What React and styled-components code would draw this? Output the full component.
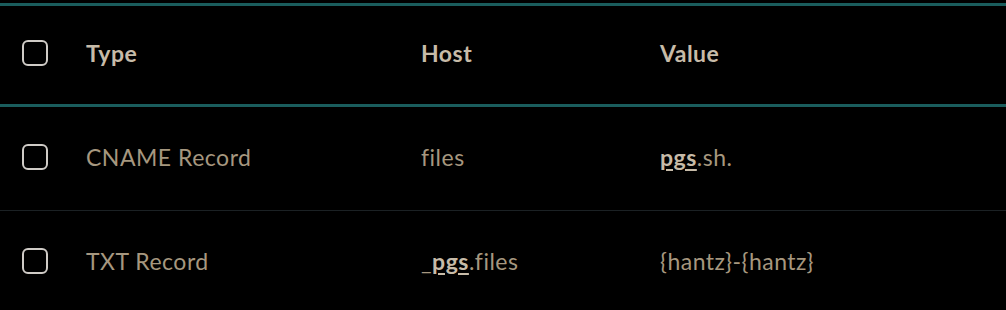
import React from "react";
import styled, { createGlobalStyle } from "styled-components";

const GlobalStyle = createGlobalStyle`
  html, body {
    margin: 0;
    padding: 0;
    background: #000;
  }
  body {
    font-family: "Lato", "Liberation Sans", sans-serif;
  }
`;

const StyledTable = styled.div`
  padding-top: 3px;
  width: 1006px;
  background: #000;
`;

const Row = styled.div`
  display: grid;
  grid-template-columns: 86px 335px 239px 1fr;
  align-items: center;
  box-sizing: content-box;
  height: ${props => (props.header ? "94px" : "99px")};
  padding-bottom: 4px;
  border-top: ${props => (props.header ? "3px solid #1a5d5d" : "none")};
  border-bottom: ${props =>
    props.header ? "3px solid #1a5d5d" : props.last ? "none" : "1px solid #1b2124"};
`;

const CheckCell = styled.div`
  padding-left: 22px;
  display: flex;
  align-items: center;
`;

const Checkbox = styled.span`
  display: block;
  width: 22px;
  height: 22px;
  border: 2px solid #cfcbc6;
  border-radius: 6px;
`;

const Cell = styled.div`
  font-size: 23px;
  letter-spacing: 0.5px;
  color: ${props => (props.header ? "#c7bba8" : "#a6977f")};
  font-weight: ${props => (props.header ? 700 : 400)};
  white-space: nowrap;
`;

const Strong = styled.strong`
  font-weight: 700;
  color: #c7bba8;
  text-decoration: underline;
  text-decoration-thickness: 1.5px;
  text-underline-offset: 3px;
`;

const records = [
  {
    type: "CNAME Record",
    host: <>files</>,
    value: (
      <>
        <Strong>pgs</Strong>.sh.
      </>
    )
  },
  {
    type: "TXT Record",
    host: (
      <>
        _<Strong>pgs</Strong>.files
      </>
    ),
    value: <>{"{hantz}-{hantz}"}</>
  }
];

export default function App() {
  return (
    <StyledTable>
      <GlobalStyle />
      <Row header>
        <CheckCell>
          <Checkbox />
        </CheckCell>
        <Cell header>Type</Cell>
        <Cell header>Host</Cell>
        <Cell header>Value</Cell>
      </Row>
      {records.map((r, i) => (
        <Row key={i} last={i === records.length - 1}>
          <CheckCell>
            <Checkbox />
          </CheckCell>
          <Cell>{r.type}</Cell>
          <Cell>{r.host}</Cell>
          <Cell>{r.value}</Cell>
        </Row>
      ))}
    </StyledTable>
  );
}
